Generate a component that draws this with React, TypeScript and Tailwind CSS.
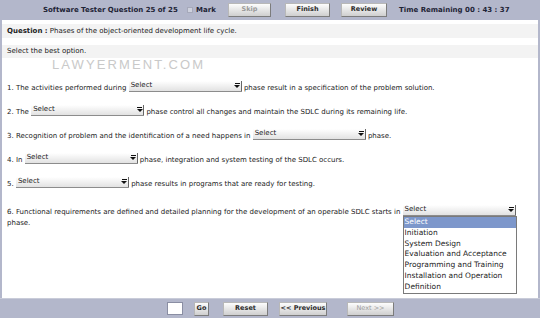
import React from "react";

const options = [
  "Select",
  "Initiation",
  "System Design",
  "Evaluation and Acceptance",
  "Programming and Training",
  "Installation and Operation",
  "Definition",
];

const Btn = ({ label, w, disabled }: { label: string; w: string; disabled?: boolean }) => (
  <div
    className={`${w} h-[14px] flex items-center justify-center whitespace-nowrap bg-gradient-to-b from-[#fdfdfd] to-[#cfcfcf] border border-[#b8b8b8] border-b-[#7c7c7c] border-r-[#7c7c7c] text-[6.5px] ${
      disabled ? "text-[#9a9a9a]" : "font-bold text-[#2a2a2a]"
    }`}
  >
    {label}
  </div>
);

const Select = ({ className = "" }: { className?: string }) => (
  <span
    className={`inline-flex w-[113px] h-[11px] bg-gradient-to-b from-[#ffffff] to-[#e2e2e2] border-b border-[#8c8c8c] ${className}`}
  >
    <span className="flex-1 pl-[2px] leading-[8px] text-[7px] text-[#222]">Select</span>
    <span className="w-[8px] flex flex-col items-center pt-[2px] border-r border-[#666]">
      <span className="w-[5px] h-[1px] bg-[#111]" />
      <span className="w-0 h-0 border-l-[3px] border-r-[3px] border-t-[3px] border-l-transparent border-r-transparent border-t-[#111] mt-[1px]" />
    </span>
  </span>
);

const Row = ({ before, after }: { before: string; after: string }) => (
  <div className="h-[13px] flex items-center whitespace-pre">
    <span>{before}</span>
    <Select className="mb-[5px]" />
    <span>{after}</span>
  </div>
);

export default function App() {
  return (
    <div className="w-[540px] h-[318px] bg-[#b3b7cb] flex flex-col font-['DejaVu_Sans',sans-serif] text-[7px] text-[#222]">
      <div className="h-[20px] flex items-center pl-[43px] text-[#1e2436] font-bold whitespace-nowrap text-[7px]">
        <span className="w-[130px]">Software Tester Question 25 of 25</span>
        <span className="ml-[14px] w-[6px] h-[6px] bg-[#cfd2de] border border-[#a6a9ba]" />
        <span className="ml-[3px] w-[20px]">Mark</span>
        <div className="ml-[12px]">
          <Btn label="Skip" w="w-[43px]" disabled />
        </div>
        <div className="ml-[14px]">
          <Btn label="Finish" w="w-[45px]" />
        </div>
        <div className="ml-[11px]">
          <Btn label="Review" w="w-[46px]" />
        </div>
        <span className="ml-[12px]">Time Remaining 00 : 43 : 37</span>
      </div>

      <div className="flex-1 bg-white mx-[2px] pt-[4px] flex flex-col">
        <div className="h-[14px] bg-[#f3f3f3] flex items-center px-[5px]">
          <span className="font-bold">Question :</span>
          <span>&nbsp;Phases of the object-oriented development life cycle.</span>
        </div>
        <div className="h-[13px] mt-[7px] bg-[#f3f3f3] flex items-center px-[5px]">Select the best option.</div>
        <div className="h-[13px] pl-[50px] flex items-center font-['Liberation_Sans',sans-serif] text-[13px] tracking-[2.1px] text-[#c9c9c9]">
          LAWYERMENT.COM
        </div>

        <div className="mt-[11px] px-[5px] flex flex-col gap-[11px]">
          <Row before="1. The activities performed during " after=" phase result in a specification of the problem solution." />
          <Row before="2. The " after=" phase control all changes and maintain the SDLC during its remaining life." />
          <Row before="3. Recognition of problem and the identification of a need happens in " after=" phase." />
          <Row before="4. In " after=" phase, integration and system testing of the SDLC occurs." />
          <Row before="5. " after=" phase results in programs that are ready for testing." />
        </div>

        <div className="mt-[14px] px-[5px] leading-[11px]">
          6. Functional requirements are defined and detailed planning for the development of an operable SDLC starts in{" "}
          <span className="relative inline-block align-[2px]">
            <Select className="align-top" />
            <div className="absolute left-0 top-[11px] w-[114px] bg-white border border-[#7a7a7a] flex flex-col text-[7.5px] text-[#222]">
              {options.map((o, i) => (
                <div
                  key={o}
                  className={`h-[10.8px] leading-[10.8px] pl-[1px] ${i === 0 ? "bg-[#7d97cb] text-white" : ""}`}
                >
                  {o}
                </div>
              ))}
            </div>
          </span>{" "}
          phase.
        </div>
      </div>

      <div className="h-[20px] flex items-center pl-[167px] border-t border-[#c9ccd9]">
        <div className="w-[16px] h-[13px] bg-white border border-[#8a8ea3]" />
        <div className="ml-[11px]">
          <Btn label="Go" w="w-[15px]" />
        </div>
        <div className="ml-[14px]">
          <Btn label="Reset" w="w-[45px]" />
        </div>
        <div className="ml-[11px]">
          <Btn label="<< Previous" w="w-[48px]" />
        </div>
        <div className="ml-[20px]">
          <Btn label="Next >>" w="w-[47px]" disabled />
        </div>
      </div>
    </div>
  );
}
